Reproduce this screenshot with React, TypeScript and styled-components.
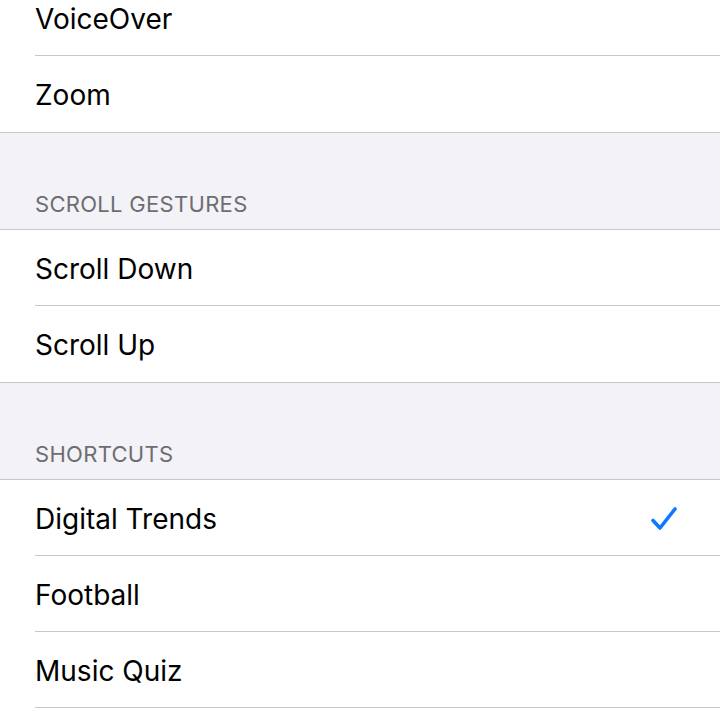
import React from "react";
import styled, { createGlobalStyle } from "styled-components";

interface Section {
  header?: string;
  items: string[];
  checked?: string;
  continues?: boolean;
}

const sections: Section[] = [
  { items: ["VoiceOver", "Zoom"] },
  { header: "SCROLL GESTURES", items: ["Scroll Down", "Scroll Up"] },
  {
    header: "SHORTCUTS",
    items: ["Digital Trends", "Football", "Music Quiz"],
    checked: "Digital Trends",
    continues: true,
  },
];

export default function App() {
  return (
    <>
      <GlobalStyle />
      <Screen>
        <List>
          {sections.map((section, index) => (
            <React.Fragment key={index}>
              {section.header && (
                <SectionHeader>
                  <HeaderText>{section.header}</HeaderText>
                </SectionHeader>
              )}
              <Group>
                {section.items.map((item, i) => (
                  <Row
                    key={item}
                    $last={!section.continues && i === section.items.length - 1}
                  >
                    <Label>{item}</Label>
                    {section.checked === item && (
                      <Check viewBox="0 0 28 26">
                        <path
                          d="M3 14.5 L10 22 L25 3"
                          fill="none"
                          stroke="#0a7aff"
                          strokeWidth="3.6"
                          strokeLinecap="round"
                          strokeLinejoin="round"
                        />
                      </Check>
                    )}
                  </Row>
                ))}
              </Group>
            </React.Fragment>
          ))}
        </List>
      </Screen>
    </>
  );
}

const GlobalStyle = createGlobalStyle`
  html, body {
    margin: 0;
    padding: 0;
    background: #ffffff;
  }
  body {
    font-family: Inter, "Noto Sans", "Liberation Sans", sans-serif;
    -webkit-font-smoothing: antialiased;
  }
`;

const Screen = styled.div`
  width: 720px;
  height: 720px;
  overflow: hidden;
  background: #ffffff;
`;

const List = styled.div`
  margin-top: -20px;
  display: flex;
  flex-direction: column;
`;

const SectionHeader = styled.div`
  height: 98px;
  box-sizing: border-box;
  background: #f2f2f7;
  border-top: 1px solid #c8c7cc;
  border-bottom: 1px solid #c8c7cc;
  display: flex;
  align-items: flex-end;
  padding: 0 35px 12px;
`;

const HeaderText = styled.div`
  font-size: 22px;
  color: #6d6d72;
  letter-spacing: 0.3px;
`;

const Group = styled.div`
  background: #ffffff;
  padding-left: 35px;
`;

const Row = styled.div<{ $last: boolean }>`
  height: 76px;
  box-sizing: border-box;
  display: flex;
  align-items: center;
  justify-content: space-between;
  padding: 2px 40px 0 0;
  border-bottom: ${(p) => (p.$last ? "none" : "1px solid #c8c7cc")};
`;

const Label = styled.div`
  font-size: 28px;
  color: #000000;
`;

const Check = styled.svg`
  width: 28px;
  height: 26px;
  margin-right: 2px;
`;
